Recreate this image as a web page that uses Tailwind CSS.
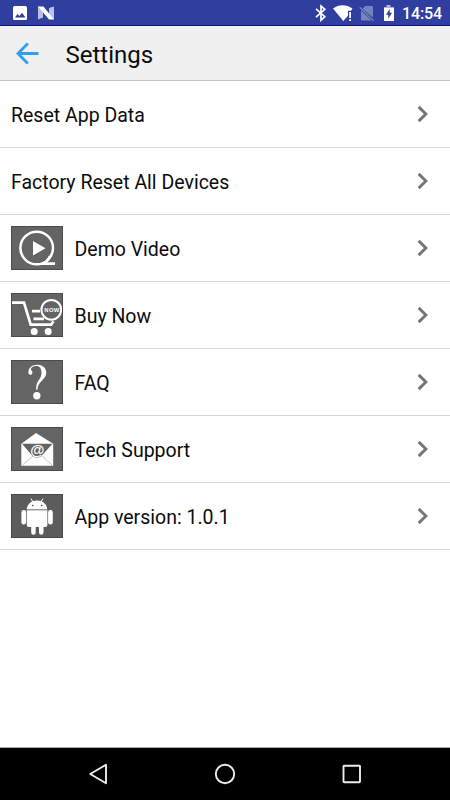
<!DOCTYPE html>
<html lang="en">
<head>
<meta charset="utf-8">
<title>Settings</title>
<script src="https://cdn.jsdelivr.net/npm/@tailwindcss/browser@4"></script>
</head>
<body class="bg-white">
<div class="flex h-[800px] w-[450px] flex-col overflow-hidden bg-white font-[Roboto,sans-serif] text-[#0c0c0c]">
  <!-- Status bar -->
  <div class="flex h-[26px] shrink-0 items-center border-b border-[#0b1486] bg-[#303f9f] text-white">
    <svg class="ml-3 h-4 w-4 shrink-0" viewBox="0 0 16 16"><path fill="#fff" fill-rule="evenodd" d="M2.500 1h11q1.500 0 1.500 1.500v11q0 1.500-1.500 1.500h-11Q1 15 1 13.500v-11Q1 1 2.500 1zM3 12.500h10.500L10 7.800l-2.600 3.300L5.500 9z"/></svg>
    <svg class="ml-[10px] h-4 w-4 shrink-0" viewBox="0 0 16 16"><path fill="#b9bfe2" d="M0 1.500L5 3v9.500L0 14.500zM11 3l5-1.500v13L11 13z"/><path fill="#fff" d="M0 1.500h5.500L16 14.500h-5z"/></svg>
    <div class="flex-1"></div>
    <svg class="h-[18px] w-[12px] shrink-0" viewBox="0 0 12 18"><path fill="none" stroke="#fff" stroke-width="1.700" d="M1 4.800l8.800 7.900L6 16.200V2l3.800 3.300L1 13.200"/></svg>
    <svg class="ml-[6px] h-[18px] w-[21px] shrink-0" viewBox="0 0 21 18"><path fill="#fff" d="M0 4.500C5.500 0 13.500 0 19.500 4.500L18 6.800h-3v5L10.300 17z"/><path fill="#fff" d="M16.200 8h1.800v6h-1.800zM16.200 15.200h1.800V17h-1.800z"/></svg>
    <svg class="ml-[5px] h-[18px] w-[16px] shrink-0" viewBox="0 0 16 18"><path fill="#7882c0" d="M6.200 2H13q1 0 1 1v10.500L3.500 4.700zM2 6.500L12.500 16.500H3q-1 0-1-1z"/><path stroke="#7882c0" stroke-width="1.300" d="M.7 3.200l13.800 13.600"/></svg>
    <svg class="ml-[8px] h-[18px] w-[12px] shrink-0" viewBox="0 0 12 18"><path fill="#aeb4dc" d="M3.500 1h4v2H11v3H1V3h2.500z"/><path fill="#fff" d="M1 4h10v13H1z"/><path fill="#303f9f" d="M6.700 5v3.700H9L5.300 14.800v-4H3z"/></svg>
    <span class="ml-[7px] mr-[8px] w-[40px] whitespace-nowrap pt-[2px] text-[16px] font-medium leading-[24px] tracking-[-0.15px]">14:54</span>
  </div>
  <!-- Title bar -->
  <header class="flex h-[55px] shrink-0 items-center border-b border-[#c4c4c4] bg-[#f0f0f0]">
    <svg class="ml-4 h-[24px] w-[24px] shrink-0" viewBox="0 0 24 24"><path fill="none" stroke="#319ff0" stroke-width="2.800" d="M22.500 12.500H2.500M11.800 2.400L1.900 12.500l9.900 10.100"/></svg>
    <h1 class="ml-[25.500px] pt-[4px] text-[24px] leading-[30px]">Settings</h1>
  </header>
  <!-- Settings list -->
  <main class="flex-1 text-[19.5px] leading-[28px]">
    <div class="flex h-[67px] items-center border-b border-[#d8d8d8] pl-[11px] pr-[20px]">
      <span class="flex-1 pt-[3px]">Reset App Data</span>
      <svg class="h-[18px] w-[14px]" viewBox="0 0 14 18"><path fill="none" stroke="#757575" stroke-width="2.900" d="M2.700 1.900l7.200 7.100-7.200 7.100"/></svg>
    </div>
    <div class="flex h-[67px] items-center border-b border-[#d8d8d8] pl-[11px] pr-[20px]">
      <span class="flex-1 pt-[3px]">Factory Reset All Devices</span>
      <svg class="h-[18px] w-[14px]" viewBox="0 0 14 18"><path fill="none" stroke="#757575" stroke-width="2.900" d="M2.700 1.900l7.200 7.100-7.200 7.100"/></svg>
    </div>
    <div class="flex h-[67px] items-center border-b border-[#d8d8d8] pl-[11px] pr-[20px]">
      <svg class="h-[44px] w-[52px] border border-[#4a4a4a] bg-[#646464]" viewBox="1 1 50 42"><circle cx="25.700" cy="22" r="16.300" fill="none" stroke="#fff" stroke-width="2.500"/><path fill="#fff" d="M22 15v14.500L34.500 22.300z"/><path fill="none" stroke="#fff" stroke-width="2.600" d="M39 30q-1.500 4.500-6.500 7.600H44"/></svg>
      <span class="ml-[11.500px] flex-1 pt-[3px]">Demo Video</span>
      <svg class="h-[18px] w-[14px]" viewBox="0 0 14 18"><path fill="none" stroke="#757575" stroke-width="2.900" d="M2.700 1.900l7.200 7.100-7.200 7.100"/></svg>
    </div>
    <div class="flex h-[67px] items-center border-b border-[#d8d8d8] pl-[11px] pr-[20px]">
      <svg class="h-[44px] w-[52px] border border-[#4a4a4a] bg-[#646464]" viewBox="1 1 50 42"><path fill="none" stroke="#fff" stroke-width="2.700" d="M1 9.700h12L19.700 31.700h20.500l2.300-3.500M21 18.200h8M22.500 25.800H33"/><circle cx="23.200" cy="38.500" r="3.500" fill="#fff"/><circle cx="37.200" cy="38.500" r="3.500" fill="#fff"/><circle cx="40.300" cy="16.800" r="9.900" fill="#646464" stroke="#fff" stroke-width="2"/><text x="33.300" y="19.100" textLength="15" font-family="Liberation Sans, sans-serif" font-size="5.800" font-weight="700" fill="#fff">NOW</text></svg>
      <span class="ml-[11.500px] flex-1 pt-[3px]">Buy Now</span>
      <svg class="h-[18px] w-[14px]" viewBox="0 0 14 18"><path fill="none" stroke="#757575" stroke-width="2.900" d="M2.700 1.900l7.200 7.100-7.200 7.100"/></svg>
    </div>
    <div class="flex h-[67px] items-center border-b border-[#d8d8d8] pl-[11px] pr-[20px]">
      <svg class="h-[44px] w-[52px] border border-[#4a4a4a] bg-[#646464]" viewBox="1 1 50 42"><path fill="#fff" d="M17.300 12C17.600 7.500 21.500 4.700 26.300 4.700c5.300 0 9 3.200 9 7.800 0 3.600-1.900 5.700-4.400 8.200-2.800 2.800-4.400 5-4.400 9h-1.300c-.3-4.600.8-7.400 3-10.300 1.500-2 2.300-4 2.300-6.700 0-4.200-1.800-6.700-5-6.700-3.200 0-5.600 1.600-5.600 3.300 0 1 1.500 1.500 1.500 3.200 0 1.400-.9 2.300-2 2.300-1.300 0-2.200-1-2.100-2.800z"/><circle cx="25.800" cy="35.800" r="3.700" fill="#fff"/></svg>
      <span class="ml-[11.500px] flex-1 pt-[3px]">FAQ</span>
      <svg class="h-[18px] w-[14px]" viewBox="0 0 14 18"><path fill="none" stroke="#757575" stroke-width="2.900" d="M2.700 1.900l7.200 7.100-7.200 7.100"/></svg>
    </div>
    <div class="flex h-[67px] items-center border-b border-[#d8d8d8] pl-[11px] pr-[20px]">
      <svg class="h-[44px] w-[52px] border border-[#4a4a4a] bg-[#646464]" viewBox="1 1 50 42"><path fill="#fff" d="M10.300 16.700L25 6l17.200 10.700v22H10.300z"/><path fill="#646464" d="M11 16.700h30.500L30.500 29q-4.500 3-9 0z"/><path fill="none" stroke="#aaa" stroke-width=".7" d="M11.500 38l11-9.500M41 38L30.500 28.500"/><text x="26.300" y="28" text-anchor="middle" font-family="Liberation Sans, sans-serif" font-size="14.500" font-weight="700" fill="#fff">@</text></svg>
      <span class="ml-[11.500px] flex-1 pt-[3px]">Tech Support</span>
      <svg class="h-[18px] w-[14px]" viewBox="0 0 14 18"><path fill="none" stroke="#757575" stroke-width="2.900" d="M2.700 1.900l7.200 7.100-7.200 7.100"/></svg>
    </div>
    <div class="flex h-[67px] items-center border-b border-[#d8d8d8] pl-[11px] pr-[20px]">
      <svg class="h-[44px] w-[52px] border border-[#4a4a4a] bg-[#5c5c5c]" viewBox="1 1 50 42"><g fill="#fff"><path d="M15.800 15C16.500 9.500 20.500 6.500 26 6.500S35.500 9.500 36.200 15z"/><path d="M15.800 16.200h20.600V31q0 2-2 2H32.500v5.500a2.200 2.200 0 0 1-4.500 0V33h-3.300v5.500a2.200 2.200 0 0 1-4.500 0V33h-2.400q-2 0-2-2z"/><rect x="10.400" y="16" width="4.700" height="14.500" rx="2.200"/><rect x="37.100" y="16" width="4.700" height="14.500" rx="2.200"/></g><path stroke="#fff" stroke-width="1" d="M20 4.500l2 3.500M32 4.500L30 8"/><path fill="none" stroke="#b8b8a8" stroke-width=".8" d="M15.800 15.700h20.500"/><circle cx="21.700" cy="11.500" r=".8" fill="#444"/><circle cx="30.700" cy="11.500" r=".8" fill="#444"/></svg>
      <span class="ml-[11.500px] flex-1 pt-[3px]">App version: 1.0.1</span>
      <svg class="h-[18px] w-[14px]" viewBox="0 0 14 18"><path fill="none" stroke="#757575" stroke-width="2.900" d="M2.700 1.900l7.200 7.100-7.200 7.100"/></svg>
    </div>
  </main>
  <!-- Navigation bar -->
  <nav class="flex h-[53px] shrink-0 items-center border-t border-[#a8a8a8] bg-black pl-[88px]">
    <svg class="h-[22px] w-[20px]" viewBox="0 0 20 22"><path fill="none" stroke="#ececec" stroke-width="1.900" stroke-linejoin="round" d="M2.200 11L18 1.800v18.400z"/></svg>
    <svg class="ml-[106px] h-[22px] w-[22px]" viewBox="0 0 22 22"><circle cx="11" cy="11" r="9.200" fill="none" stroke="#ececec" stroke-width="1.900"/></svg>
    <svg class="ml-[105px] h-[22px] w-[22px]" viewBox="0 0 22 22"><rect x="2.500" y="2.700" width="16.500" height="16.500" rx=".6" fill="none" stroke="#ececec" stroke-width="1.900"/></svg>
  </nav>
</div>
</body>
</html>
